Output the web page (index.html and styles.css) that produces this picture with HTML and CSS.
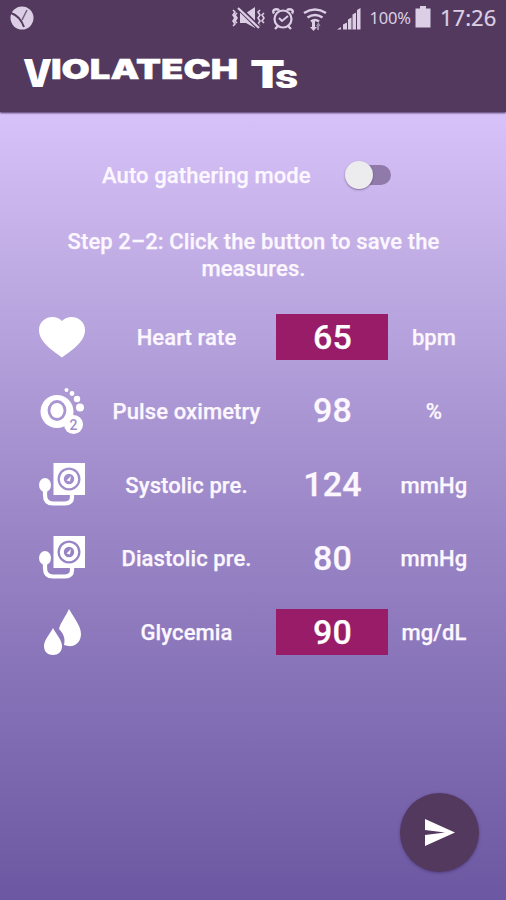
FILE: index.html
```html
<!DOCTYPE html>
<html lang="en">
<head>
<meta charset="utf-8">
<title>Violatech Ts</title>
<link rel="stylesheet" href="styles.css">
</head>
<body>
<svg class="defs" aria-hidden="true">
  <symbol id="gauge" viewBox="0 0 50 46">
    <path fill="#fff" fill-rule="evenodd" d="M15.500 1H47V33H15.500ZM31 5.500a11.500 11.500 0 1 0 .01 0Z"/>
    <circle cx="31" cy="17" r="7.200" fill="none" stroke="#fff" stroke-width="4"/>
    <path d="M28.500 18.500l4.500-4.500-1 5.500z" fill="#fff"/>
    <ellipse cx="7" cy="23" rx="6" ry="7" fill="#fff"/>
    <path d="M7 28v5Q7 41.500 15 41.500H27Q34 41.500 34 35V32" fill="none" stroke="#fff" stroke-width="4.200"/>
  </symbol>
</svg>
<div class="screen">
  <header class="header">
    <div class="status">
      <svg class="app-icon" width="24" height="24" viewBox="0 0 24 24"><circle cx="12" cy="12" r="11.500" fill="#dccfe5"/><path d="M1 7Q10 10 14 21" fill="none" stroke="#53385e" stroke-width="2"/><path d="M12 14L17 4" stroke="#75607e" stroke-width="1.500"/></svg>
      <svg class="signals" width="130" height="28" viewBox="0 0 130 28">
        <g fill="none" stroke="#dccfe5" stroke-width="1.600">
          <path d="M2 6l2 2-2 3 2 3-2 3 2 3-2 2M6 9l-2 2 2 3-2 3 2 2M29 6l-2 2 2 3-2 3 2 3-2 3 2 2M33 9l-2 2 2 3-2 3 2 2"/>
          <circle cx="52" cy="15" r="8.500" stroke-width="2.200"/><path d="M48 14l3 3 6-5" stroke-width="2"/><path d="M43 9.500q-2-3 1-4t4 1M61 9.500q2-3-1-4t-4 1M47 22l-3 3M57 22l3 3" stroke-width="2.400"/>
          <path d="M73 9q11-7 22 0M76.500 13.500q7.500-5 15 0M80 17.500q4-3 8 0" stroke-width="2.500"/>
        </g>
        <path fill="#dccfe5" d="M9 9h6l9-6v21L15 19H9z"/>
        <path d="M7 3L28 24" stroke="#53385e" stroke-width="5"/><path d="M7 4L28 24" stroke="#dccfe5" stroke-width="2.200"/>
        <path fill="#dccfe5" d="M81 17h3v6h2l-3.500 4-3.500-4h2z"/><path fill="#a18dac" d="M88 26h-2v-4h-1l2.500-4 2 4h-1.500z"/>
        <path fill="#dccfe5" d="M106 25.500l4-2.500v2.500zM112 20.500l4-2v7h-4zM117 15.500l3.500-2v12h-3.500zM121.500 10.500l3.500-2v17h-3.500zM126 6l3.500-2v21.500h-3.500z"/>
      </svg>
      <span class="charge">100%</span>
      <svg class="battery" width="16" height="22" viewBox="0 0 16 22"><path fill="#dccfe5" d="M5 0h6v2.500h4.500V21.500H.5V2.500H5z"/></svg>
      <span class="clock">17:26</span>
    </div>
    <svg class="logo" width="506" height="76" viewBox="0 -17 506 76" role="img" aria-label="Violatech Ts">
      <text x="23" y="33.500" font-size="38" textLength="29" lengthAdjust="spacingAndGlyphs">V</text>
      <text class="logo-caps" x="51" y="26" font-size="27" textLength="187" lengthAdjust="spacingAndGlyphs">IOLATECH</text>
      <text x="250" y="34.500" font-size="38" textLength="35" lengthAdjust="spacingAndGlyphs">T</text>
      <text class="logo-gap" x="275" y="34.500" font-size="24" textLength="23" lengthAdjust="spacingAndGlyphs">S</text>
    </svg>
  </header>
  <main class="content">
    <div class="mode">
      <span class="mode-label">Auto gathering mode</span>
      <span class="switch"><span class="thumb"></span></span>
    </div>
    <p class="step">Step 2–2: Click the button to save the<br>measures.</p>
    <div class="rows">
      <div class="row">
        <svg class="icon" width="50" height="46" viewBox="0 0 50 46"><path fill="#fff" d="M24 43.500C17 38 1 29 1 16 1 3 17-1 24 7 31-1 47 3 47 16 47 29 31 38 24 43.500Z"/></svg>
        <span class="label">Heart rate</span><span class="value alert">65</span><span class="unit">bpm</span>
      </div>
      <div class="row">
        <svg class="icon" width="50" height="46" viewBox="0 0 50 46"><circle cx="19" cy="23.500" r="16.500" fill="#fff"/><circle cx="35.500" cy="36.500" r="9.500" fill="#fff"/><ellipse cx="19" cy="22.500" rx="8" ry="9" fill="none" stroke="#a995d2" stroke-width="2.800"/><text class="two" x="31.500" y="41.500">2</text><g fill="#fff"><circle cx="28.500" cy="2" r="2"/><circle cx="34" cy="5.500" r="2.400"/><circle cx="39" cy="11" r="3.200"/><circle cx="42" cy="19.500" r="4"/></g></svg>
        <span class="label">Pulse oximetry</span><span class="value">98</span><span class="unit">%</span>
      </div>
      <div class="row">
        <svg class="icon" width="50" height="46"><use href="#gauge"/></svg>
        <span class="label">Systolic pre.</span><span class="value">124</span><span class="unit">mmHg</span>
      </div>
      <div class="row">
        <svg class="icon" width="50" height="46"><use href="#gauge"/></svg>
        <span class="label">Diastolic pre.</span><span class="value">80</span><span class="unit">mmHg</span>
      </div>
      <div class="row">
        <svg class="icon" width="50" height="46" viewBox="0 0 50 46"><path fill="#fff" d="M31 0C36 9 43 17 43 25 43 34 36 38 30 37L26 36C28 28 24 23 21 20 22 14 28 7 31 0ZM15 19C18 25 24 31 24 37 24 43 20 46 15 46S6 43 6 37C6 31 12 25 15 19Z"/></svg>
        <span class="label">Glycemia</span><span class="value alert">90</span><span class="unit">mg/dL</span>
      </div>
    </div>
  </main>
  <button class="send" aria-label="Send"><svg width="32" height="28" viewBox="0 0 32 28"><path fill="#fff" d="M1 0L31 13.500 1 27V16L21 13.500 1 11Z"/></svg></button>
</div>
</body>
</html>
```

FILE: styles.css
```css
* { box-sizing: border-box; }
body { margin: 0; font-family: Roboto, sans-serif; color: #fcf7ff; }
.defs { display: none; }
.screen {
  position: relative;
  width: 506px;
  height: 900px;
  overflow: hidden;
  background: linear-gradient(#d7c2f9 112px, #c4b0e7 240px, #a995d2 420px, #8e7abd 620px, #6c58a2 900px);
}
.header {
  height: 112px;
  background: #53395e;
  box-shadow: 0 1px 2px #49305b;
}
.status {
  display: flex;
  align-items: center;
  height: 35px;
  padding-left: 10px;
  font-family: "Noto Sans", sans-serif;
  color: #dccfe5;
}
.app-icon { margin-right: 197px; }
.signals { flex: none; }
.charge { width: 42px; margin-left: 8.500px; font-size: 16.500px; letter-spacing: -0.2px; }
.battery { margin: -2px 0 0 3.500px; }
.clock { margin: -1px 0 0 9px; font-size: 22px; -webkit-text-stroke: 0.2px #dccfe5; }
.logo {
  display: block;
  margin-top: 1px;
  font-family: Inter, sans-serif;
  font-weight: 900;
  fill: #fff;
}
.logo-caps { stroke: #fff; stroke-width: 0.4px; }
.logo-gap { stroke: #53395e; stroke-width: 3px; paint-order: stroke; }
.content { font-size: 22px; font-weight: 500; letter-spacing: 0.1px; -webkit-text-stroke: 0.25px #fcf7ff; }
.mode {
  display: flex;
  align-items: center;
  height: 46px;
  margin: 40px 0 0 102px;
}
.mode-label { width: 243px; }
.switch { width: 46px; height: 20px; border-radius: 10px; background: linear-gradient(90deg, transparent 10px, #907aaa 10px); }
.thumb {
  display: block;
  width: 28px;
  height: 28px;
  margin-top: -4px;
  border-radius: 50%;
  background: #ececee;
  box-shadow: 0 1px 2px rgba(60, 40, 80, 0.5);
}
.step { margin: 31px 0 0; padding-left: 1px; line-height: 26.500px; text-align: center; }
.rows { display: grid; grid-auto-rows: 46px; gap: 27.800px; margin-top: 31px; }
.row { display: grid; grid-template-columns: 50px 188px 112px 92px; align-items: center; padding-left: 38px; }
.icon { margin-top: 1px; }
.label { padding-left: 9px; text-align: center; }
.label, .unit { line-height: 26px; padding-top: 3px; }
.value { font-size: 34px; line-height: 47px; height: 46px; padding-left: 1px; text-align: center; }
.alert { background: #981c67; color: #fff; }
.unit { text-align: center; }
.two { fill: #a28ecb; -webkit-text-stroke: 0.3px #a28ecb; font-size: 14px; }
.send {
  position: absolute;
  right: 27px;
  bottom: 28px;
  display: flex;
  align-items: center;
  justify-content: center;
  width: 79px;
  height: 79px;
  padding: 0;
  border: 0;
  border-radius: 50%;
  background: #53395e;
  box-shadow: 0 1px 3px rgba(60, 40, 100, 0.6);
}
```
